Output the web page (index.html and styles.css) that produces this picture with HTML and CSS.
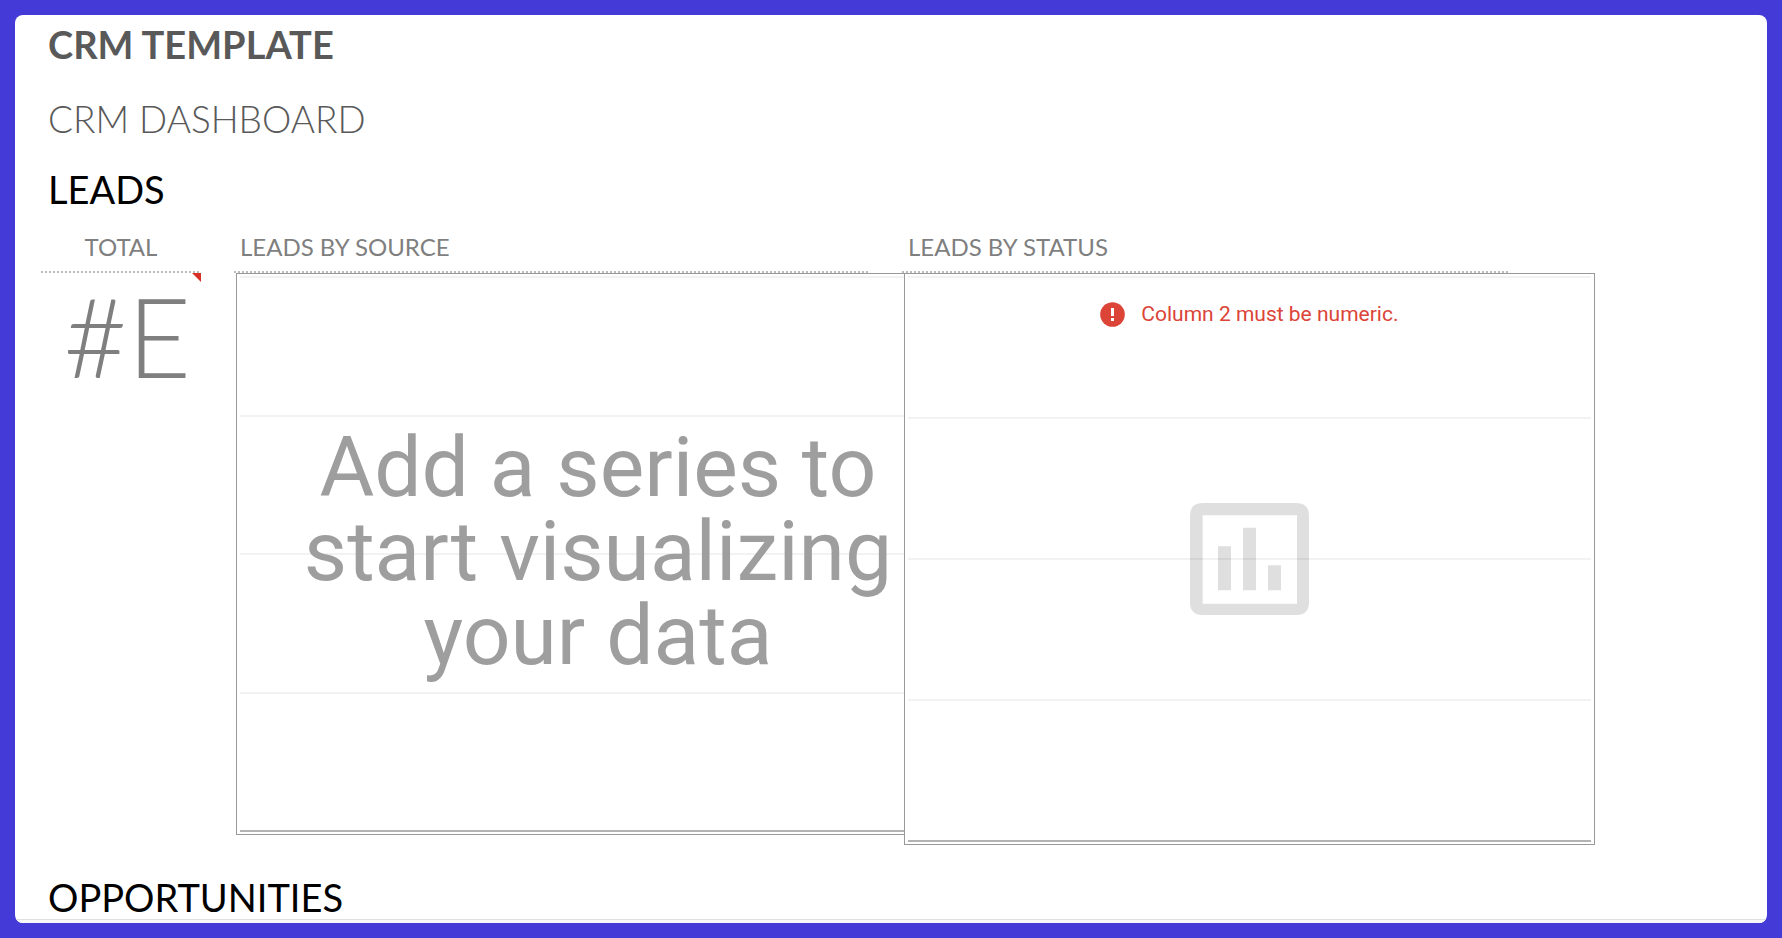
FILE: index.html
```
<!DOCTYPE html>
<html lang="en">
<head>
    <meta charset="utf-8">
    <title>CRM Template</title>
    <link rel="stylesheet" href="styles.css">
</head>
<body>

<main class="sheet">
    <h1 class="title">CRM TEMPLATE</h1>
    <h2 class="subtitle">CRM DASHBOARD</h2>
    <h2 class="section">LEADS</h2>

    <div class="columns">
        <section class="column">
            <h3 class="label center">TOTAL</h3>
            <div class="total">#E</div>
        </section>

        <section class="column">
            <h3 class="label">LEADS BY SOURCE</h3>
            <div class="chart source">
                <div class="band"></div>
                <div class="band"></div>
                <div class="band"></div>
                <div class="band"></div>
                <div class="axis"></div>
                <p class="empty">Add a series to<br>start visualizing<br>your data</p>
            </div>
        </section>

        <section class="column">
            <h3 class="label">LEADS BY STATUS</h3>
            <div class="chart status">
                <div class="band">
                    <p class="error">
                        <svg width="25" height="25" viewBox="0 0 25 25" aria-hidden="true">
                            <circle cx="12.5" cy="12.5" r="12.3" fill="#db4437"/>
                            <path d="M11 6h3v8h-3zM11 16h3v3h-3z" fill="#fff"/>
                        </svg>
                        Column 2 must be numeric.
                    </p>
                </div>
                <div class="band"></div>
                <div class="band"></div>
                <div class="band"></div>
                <div class="axis"></div>
                <div class="placeholder">
                    <svg width="119" height="112" viewBox="0 0 357 336" aria-hidden="true">
                        <path fill-rule="evenodd" d="M38 0H319Q357 0 357 38V298Q357 336 319 336H38Q0 336 0 298V38Q0 0 38 0ZM38 37V302H321V37ZM84 130H123V262H84ZM159 74H198V262H159ZM234 187H273V262H234Z"/>
                    </svg>
                </div>
            </div>
        </section>
    </div>

    <h2 class="section last">OPPORTUNITIES</h2>
    <div class="edge"></div>
</main>

</body>
</html>
```
FILE: styles.css
```
* {
    box-sizing: border-box;
}

body {
    margin: 0;
    padding: 15px;
    background: #443ad8;
    font-family: "Century Gothic", Lato, sans-serif;
}

h1, h2, h3, p {
    margin: 0;
    font-weight: normal;
}

.sheet {
    background: #fff;
    border-radius: 8px;
    overflow: hidden;
}

.title, .subtitle, .section {
    padding-left: 33px;
}

.title {
    margin-bottom: 12px;
    font-size: 38px;
    line-height: 58px;
    font-weight: bold;
    color: #595959;
}

.subtitle {
    font-size: 37px;
    line-height: 68px;
    font-weight: 300;
    color: #595959;
}

.section {
    padding-top: 4px;
    font-size: 38px;
    line-height: 64px;
    color: #000;
}

.section.last {
    padding-top: 30px;
    line-height: 44px;
}

/* sheet columns, the last track stays empty */
.columns {
    display: grid;
    grid-template-columns: 160fr 635fr 606fr 226fr;
    gap: 33px;
    padding-left: 26px;
}

.column {
    min-width: 0;
}

.label {
    padding: 2px 6px;
    font-size: 24px;
    line-height: 48px;
    color: #7f7f7f;
    background: repeating-linear-gradient(to right, #bbb 0 2px, transparent 2px 4px) left bottom / 100% 2px no-repeat;
}

.label.center {
    text-align: center;
}

.total {
    position: relative;
    padding-right: 10px;
    font-size: 110px;
    line-height: 124px;
    font-weight: 300;
    text-align: right;
    color: #7f7f7f;
}

/* red corner of a cell that holds an error */
.total::after {
    content: "";
    position: absolute;
    top: 0;
    right: 0;
    border-top: 9px solid #d93025;
    border-left: 9px solid transparent;
}

/* charts float over the cells and run past their column */
.chart {
    position: relative;
    display: flex;
    flex-direction: column;
    width: 114%;
    margin-left: 2px;
    padding: 2px 3px;
    border: 1px solid #999;
    background: #fff;
    font-family: Roboto, sans-serif;
}

.source {
    height: 562px;
}

.status {
    height: 572px;
}

.band {
    flex: 1;
    border-top: 2px solid #f2f2f2;
}

.axis {
    height: 2px;
    background: #b3b3b3;
}

.empty, .placeholder {
    position: absolute;
    inset: 0;
    display: flex;
    align-items: center;
    justify-content: center;
}

.empty {
    padding-bottom: 4px;
    font-size: 84px;
    line-height: 84px;
    text-align: center;
    color: #9e9e9e;
}

.placeholder {
    fill: #000;
    opacity: 0.12;
}

.error {
    display: flex;
    align-items: center;
    justify-content: center;
    gap: 16px;
    padding-top: 24px;
    font-size: 21px;
    line-height: 25px;
    color: #db4437;
}

.edge {
    height: 4px;
    border-top: 1px solid #e0e0e0;
    background: #f8f8f8;
}
```
